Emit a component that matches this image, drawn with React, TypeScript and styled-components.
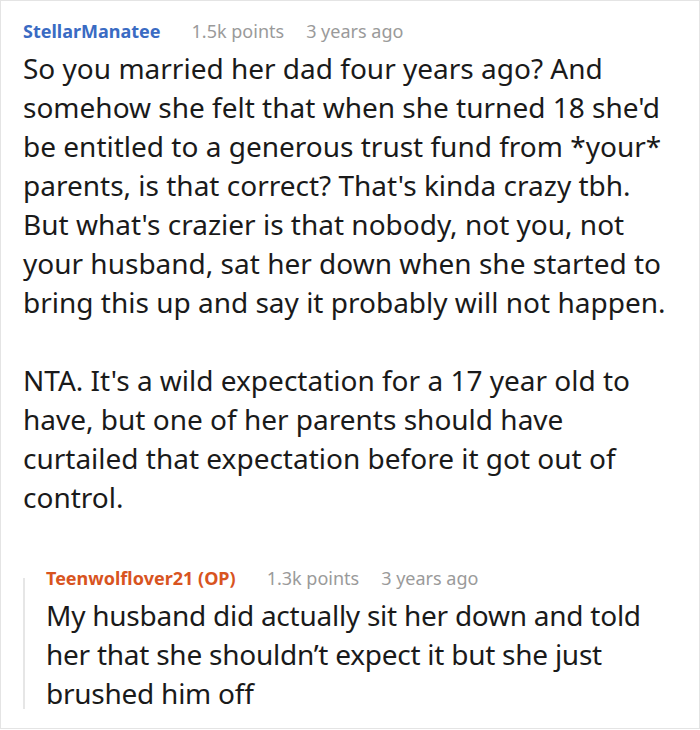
import React from "react";
import styled, { createGlobalStyle } from "styled-components";

const Global = createGlobalStyle`
  html, body { margin: 0; padding: 0; background: #fff; }
  body { font-family: "Noto Sans", "Open Sans", sans-serif; }
`;

const Card = styled.div`
  box-sizing: border-box;
  width: 700px;
  height: 729px;
  border: 1px solid #e4e4e4;
  padding: 18px 24px 0 22px;
  overflow: hidden;
`;

const Meta = styled.div`
  display: flex;
  align-items: baseline;
  font-size: 18px;
  line-height: 24px;
  color: #9a9a9a;
`;

const Author = styled.span<{ $op?: boolean }>`
  font-weight: 700;
  color: ${(p) => (p.$op ? "#d8541f" : "#3a6bc3")};
  margin-right: 31px;
`;

const Stat = styled.span`
  margin-right: 22px;
`;

const Body = styled.p<{ $first?: boolean; $tight?: boolean }>`
  margin: ${(p) => (p.$first ? "0" : "6px")} 0 0;
  font-size: 28px;
  line-height: 39px;
  color: #1a1a1a;
  letter-spacing: ${(p) => (p.$tight ? "-0.25px" : "normal")};
`;

const Gap = styled.div`
  height: 39px;
`;

const Reply = styled.div`
  position: relative;
  margin-top: 49px;
  padding-left: 23px;
  &::before {
    content: "";
    position: absolute;
    left: 0;
    top: 12px;
    bottom: 4px;
    width: 2px;
    background: #e6e6e6;
  }
`;

export default function App() {
  return (
    <>
      <Global />
      <Card>
        <Meta>
          <Author>StellarManatee</Author>
          <Stat>1.5k points</Stat>
          <span>3 years ago</span>
        </Meta>
        <Body>
          So you married her dad four years ago? And somehow she felt that when she turned 18 she'd be
          entitled to a generous trust fund from *your* parents, is that correct? That's kinda crazy tbh.
          But what's crazier is that nobody, not you, not your husband, sat her down when she started to
          bring this up and say it probably will not happen.
        </Body>
        <Gap />
        <Body $first>
          NTA. It's a wild expectation for a 17 year old to have, but one of her parents should have
          curtailed that expectation before it got out of control.
        </Body>
        <Reply>
          <Meta>
            <Author $op>Teenwolflover21 (OP)</Author>
            <Stat>1.3k points</Stat>
            <span>3 years ago</span>
          </Meta>
          <Body $tight>
            My husband did actually sit her down and told her that she shouldn’t expect it but she just
            brushed him off
          </Body>
        </Reply>
      </Card>
    </>
  );
}
